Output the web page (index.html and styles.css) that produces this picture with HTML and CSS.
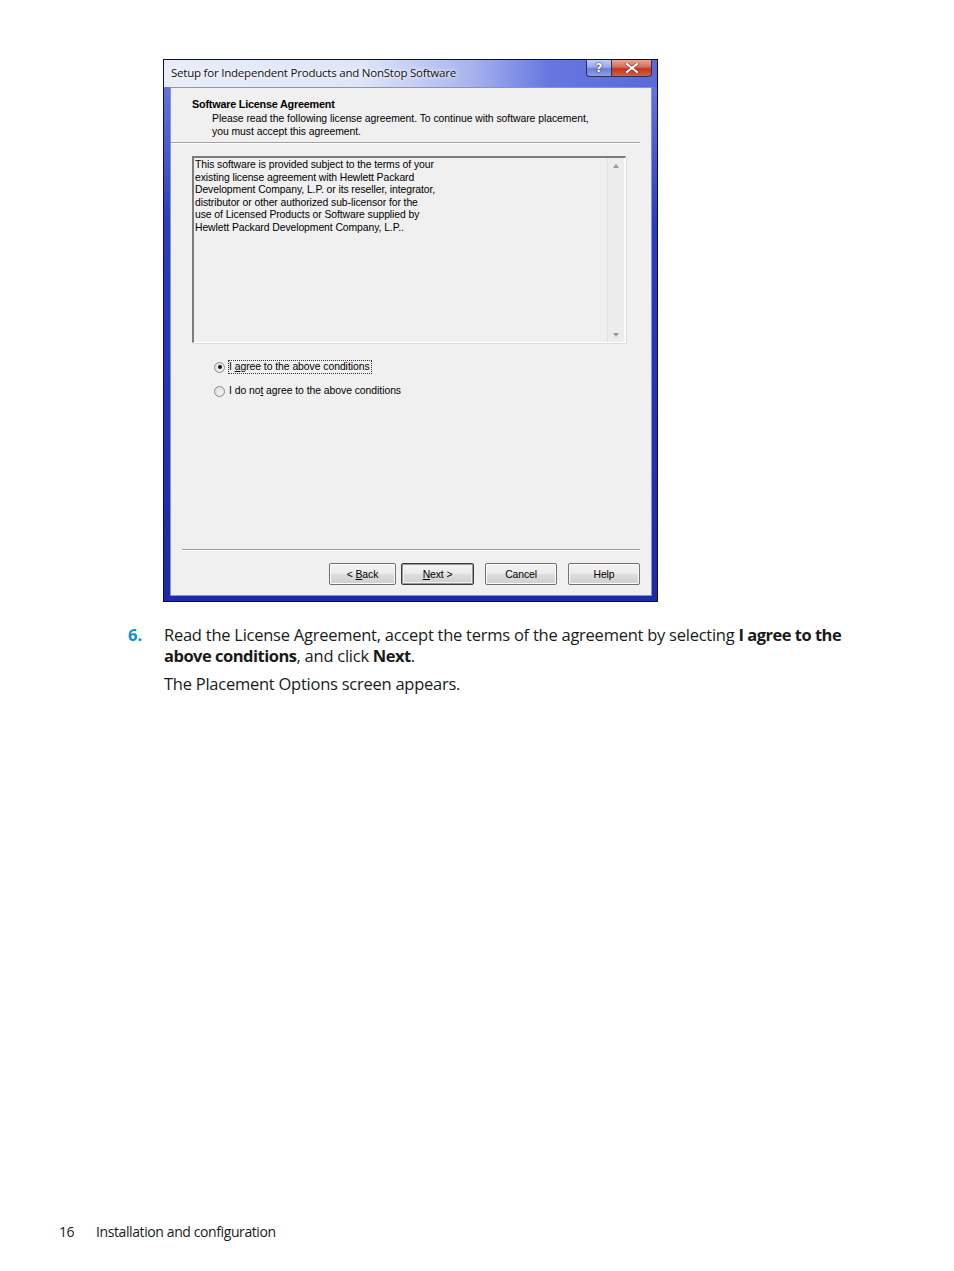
FILE: index.html
```html
<!DOCTYPE html>
<html>
<head>
<meta charset="utf-8">
<link rel="stylesheet" href="styles.css">
</head>
<body>
<div class="page">
  <div class="window">
    <div class="titlebar">
      <span class="title">Setup for Independent Products and NonStop Software</span>
      <div class="caption-btns">
        <div class="cbtn help">?</div>
        <div class="cbtn close">
          <svg width="14" height="10" viewBox="0 0 14 10"><path d="M2 1 L12 9 M12 1 L2 9" stroke="#6a1a10" stroke-width="3.4" stroke-linecap="square" opacity="0.55"/><path d="M2 1 L12 9 M12 1 L2 9" stroke="#fff" stroke-width="2" stroke-linecap="square"/></svg>
        </div>
      </div>
    </div>
    <div class="client">
      <div class="header">
        <div class="h-title">Software License Agreement</div>
        <div class="h-desc">Please read the following license agreement. To continue with software placement,<br>you must accept this agreement.</div>
      </div>
      <div class="sep top-sep"></div>
      <div class="textbox">
        <div class="tb-text">This software is provided subject to the terms of your<br>existing license agreement with Hewlett Packard<br>Development Company, L.P. or its reseller, integrator,<br>distributor or other authorized sub-licensor for the<br>use of Licensed Products or Software supplied by<br>Hewlett Packard Development Company, L.P..</div>
        <div class="scrollbar">
          <span class="arrow up"></span>
          <span class="arrow down"></span>
        </div>
      </div>
      <div class="radios">
        <div class="radio-row"><span class="radio checked"></span><span class="rlabel focus">I <u>a</u>gree to the above conditions</span></div>
        <div class="radio-row"><span class="radio"></span><span class="rlabel">I do no<u>t</u> agree to the above conditions</span></div>
      </div>
      <div class="spacer"></div>
      <div class="sep bottom-sep"></div>
      <div class="buttons">
        <div class="btn"><span>&lt; <u>B</u>ack</span></div>
        <div class="btn default"><span><u>N</u>ext &gt;</span></div>
        <div class="btn gap"><span>Cancel</span></div>
        <div class="btn gap"><span>Help</span></div>
      </div>
    </div>
  </div>

  <div class="step">
    <span class="num">6.</span>
    <div class="step-body">
      <p class="p1">Read the License Agreement, accept the terms of the agreement by selecting <b>I agree to the</b><br><b>above conditions</b>, and click <b>Next</b>.</p>
      <p class="p2">The Placement Options screen appears.</p>
    </div>
  </div>

  <div class="spacer-page"></div>

  <div class="footer">
    <span class="pnum">16</span>
    <span class="ftext">Installation and configuration</span>
  </div>
</div>
</body>
</html>
```

FILE: styles.css
```css
html, body {
  margin: 0;
  padding: 0;
  background: #fff;
}
.page {
  width: 954px;
  height: 1271px;
  display: flex;
  flex-direction: column;
  font-family: "Liberation Sans", Arial, sans-serif;
}
.window {
  margin-top: 59px;
  margin-left: 163px;
  width: 495px;
  height: 543px;
  box-sizing: border-box;
  border: 1px solid #0b1030;
  background: linear-gradient(to bottom, #6f80e4 0%, #2a3cc0 30%, #1c2aa8 100%);
  display: flex;
  flex-direction: column;
  position: relative;
}
.titlebar {
  height: 27px;
  display: flex;
  align-items: flex-start;
  background: linear-gradient(to right, #e9edf9 0%, #dfe5f8 40%, #a9b4ef 62%, #6677e0 78%, #5a6ad8 100%);
  position: relative;
}
.title {
  font-family: "Open Sans", "Noto Sans", sans-serif;
  font-size: 11.5px;
  color: #101010;
  margin-left: 7px;
  margin-top: 5px;
  letter-spacing: -0.22px;
  text-shadow: 0 0 6px #fff, 0 0 3px #fff;
}
.caption-btns {
  margin-left: auto;
  margin-right: 5px;
  display: flex;
  margin-top: 0;
}
.cbtn {
  height: 17px;
  box-sizing: border-box;
  border: 1px solid #2a3060;
  border-top: none;
  display: flex;
  align-items: center;
  justify-content: center;
}
.cbtn.help {
  width: 25px;
  border-radius: 0 0 0 4px;
  background: linear-gradient(to bottom, #c3cdf0 0%, #9aa9e6 45%, #6c7fd6 55%, #8da0e8 100%);
  color: #fff;
  font-family: "DejaVu Sans", sans-serif;
  font-weight: bold;
  font-size: 12px;
  text-shadow: 0 0 2px #203080, 0 0 1px #203080;
  border-right: none;
}
.cbtn.close {
  width: 41px;
  border-radius: 0 0 4px 0;
  background: linear-gradient(to bottom, #e8a89a 0%, #d46a55 45%, #c2351c 55%, #d8603e 100%);
}
.client {
  flex: 1;
  margin: 0 5px 5px 6px;
  background: #f0f0f0;
  border: 1px solid #8a94b8;
  display: flex;
  flex-direction: column;
  font-family: "Liberation Sans", Arial, sans-serif;
  font-size: 10.4px;
  color: #000;
}
.header {
  padding-left: 21px;
  padding-top: 9px;
}
.h-title {
  font-weight: bold;
  font-size: 10.8px;
  letter-spacing: -0.2px;
  line-height: 14px;
}
.h-desc {
  padding-left: 20px;
  line-height: 13px;
  margin-top: 1px;
  letter-spacing: -0.04px;
}
.sep {
  height: 0;
  border-top: 1px solid #a0a0a0;
  border-bottom: 1px solid #ffffff;
}
.top-sep {
  margin-top: 4px;
  margin-right: 11px;
}
.textbox {
  margin-top: 12px;
  margin-left: 21px;
  width: 434px;
  height: 187px;
  box-sizing: border-box;
  border-top: 2px solid #7c7c7c;
  border-left: 2px solid #7c7c7c;
  border-right: 1px solid #ffffff;
  border-bottom: 1px solid #ffffff;
  box-shadow: 1px 1px 0 #dcdcdc;
  display: flex;
  background: #f0f0f0;
}
.tb-text {
  flex: 1;
  padding: 1px 0 0 1px;
  line-height: 12.5px;
  letter-spacing: -0.08px;
}
.scrollbar {
  width: 16px;
  background: #ececec;
  border-left: 1px solid #e2e2e2;
  border-right: 1px solid #f8f8f8;
  display: flex;
  flex-direction: column;
  justify-content: space-between;
  align-items: center;
  padding: 6px 0 5px;
}
.arrow {
  width: 0;
  height: 0;
  border-left: 3.5px solid transparent;
  border-right: 3.5px solid transparent;
}
.arrow.up { border-bottom: 4px solid #9a9a9a; }
.arrow.down { border-top: 4px solid #9a9a9a; }
.radios {
  margin-top: 17px;
  margin-left: 43px;
  display: flex;
  flex-direction: column;
  gap: 10px;
}
.radio-row {
  display: flex;
  align-items: center;
  height: 14px;
}
.radio {
  width: 9px;
  height: 9px;
  border-radius: 50%;
  border: 1px solid #8e8f8f;
  background: radial-gradient(circle at 60% 60%, #f4f4f4 0%, #e4e4e4 60%, #d0d0d0 100%);
  position: relative;
  box-sizing: content-box;
}
.radio.checked::after {
  content: "";
  position: absolute;
  left: 2.5px;
  top: 2.5px;
  width: 4px;
  height: 4px;
  border-radius: 50%;
  background: #151515;
}
.rlabel {
  margin-left: 3px;
  padding: 0 1px 0 0;
  letter-spacing: -0.05px;
  line-height: 12px;
  border: 1px dotted transparent;
}
.rlabel.focus {
  border: 1px dotted #333;
}
.spacer { flex: 1; }
.bottom-sep {
  margin-left: 11px;
  margin-right: 11px;
}
.buttons {
  display: flex;
  justify-content: flex-end;
  margin-right: 11px;
  margin-top: 12px;
  margin-bottom: 10px;
}
.btn {
  height: 22px;
  box-sizing: border-box;
  width: 67px;
  border: 1px solid #707070;
  border-radius: 2px;
  background: linear-gradient(to bottom, #f4f4f4 0%, #ebebeb 48%, #dddddd 52%, #cfcfcf 100%);
  box-shadow: inset 0 0 0 1px #fcfcfc;
  display: flex;
  align-items: center;
  justify-content: center;
  letter-spacing: -0.1px;
  font-size: 10.4px;
}
.btn.default {
  margin-left: 5px;
  width: 73px;
  border: 1px solid #3c3c3c;
  box-shadow: inset 0 0 0 1px #9a9a9a, inset 0 0 0 2px #f0f0f0;
}
.btn.gap {
  margin-left: 11px;
  width: 72px;
}
.step {
  margin-top: 22px;
  display: flex;
  font-family: "Open Sans", "Liberation Sans", sans-serif;
  font-size: 16.5px;
  color: #1a1a1a;
}
.num {
  width: 36px;
  margin-left: 128px;
  color: #0a8fd0;
  font-weight: bold;
  line-height: 21px;
}
.step-body {
  width: 700px;
}
.step-body p {
  margin: 0;
  line-height: 21px;
  letter-spacing: -0.25px;
}
.step-body b {
  font-weight: bold;
  letter-spacing: -0.5px;
}
.p2 {
  margin-top: 7px !important;
}
.spacer-page { flex: 1; }
.footer {
  margin-left: 59px;
  margin-bottom: 30px;
  font-family: "Open Sans", "Liberation Sans", sans-serif;
  font-size: 14px;
  letter-spacing: -0.4px;
  color: #1a1a1a;
  display: flex;
}
.pnum {
  width: 37px;
}
```
